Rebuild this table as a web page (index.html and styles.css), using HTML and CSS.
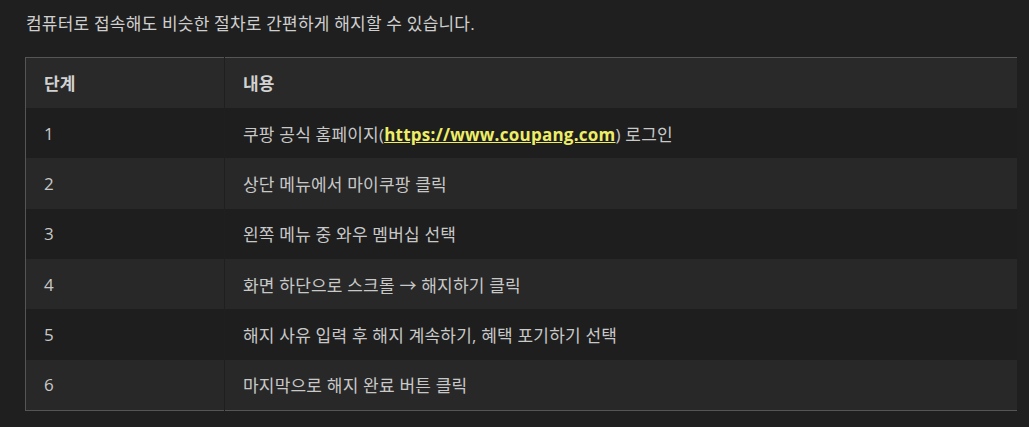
FILE: index.html
```html
<!DOCTYPE html>
<html lang="ko">
<head>
    <meta charset="UTF-8">
    <meta name="viewport" content="width=device-width, initial-scale=1.0">
    <title>쿠팡 와우 멤버십 해지</title>
    <link rel="stylesheet" href="styles.css">
</head>
<body>
    <div class="content">
        <p class="intro">컴퓨터로 접속해도 비슷한 절차로 간편하게 해지할 수 있습니다.</p>

        <table class="steps">
            <thead>
                <tr>
                    <th>단계</th>
                    <th>내용</th>
                </tr>
            </thead>
            <tbody>
                <tr>
                    <td>1</td>
                    <td>쿠팡 공식 홈페이지(<a href="https://www.coupang.com">https://www.coupang.com</a>) 로그인</td>
                </tr>
                <tr>
                    <td>2</td>
                    <td>상단 메뉴에서 마이쿠팡 클릭</td>
                </tr>
                <tr>
                    <td>3</td>
                    <td>왼쪽 메뉴 중 와우 멤버십 선택</td>
                </tr>
                <tr>
                    <td>4</td>
                    <td>화면 하단으로 스크롤 → 해지하기 클릭</td>
                </tr>
                <tr>
                    <td>5</td>
                    <td>해지 사유 입력 후 해지 계속하기, 혜택 포기하기 선택</td>
                </tr>
                <tr>
                    <td>6</td>
                    <td>마지막으로 해지 완료 버튼 클릭</td>
                </tr>
            </tbody>
        </table>
    </div>
</body>
</html>
```

FILE: styles.css
```css
body, html {
    margin: 0;
    padding: 0;
    background-color: #1f1f1f;
    color: #c8c8c8;
    font-family: 'Open Sans', 'Noto Sans CJK KR', sans-serif;
    letter-spacing: 0.2px;
}

.content {
    padding: 11px 11px 0 25px;
}

.intro {
    margin: 0 0 21px 1px;
    font-size: 17px;
    line-height: 25px;
    color: #cfcfcf;
}

/* Steps table */
.steps {
    width: 100%;
    border-collapse: collapse;
    border: 1px solid #555555;
    font-size: 17px;
}

.steps th,
.steps td {
    height: 50.4px;
    padding: 0 18px;
    text-align: left;
    border-right: 1px solid #1f1f1f;
    box-sizing: border-box;
}

.steps th:first-child,
.steps td:first-child {
    width: 199px;
}

.steps th {
    background-color: #292929;
    color: #d2d2d2;
    font-weight: bold;
}

.steps tbody tr:nth-child(odd) {
    background-color: #1e1e1e;
}

.steps tbody tr:nth-child(even) {
    background-color: #282828;
}

.steps a {
    color: #eeee66;
    font-weight: bold;
    text-decoration: underline;
    letter-spacing: 0.25px;
}
```
